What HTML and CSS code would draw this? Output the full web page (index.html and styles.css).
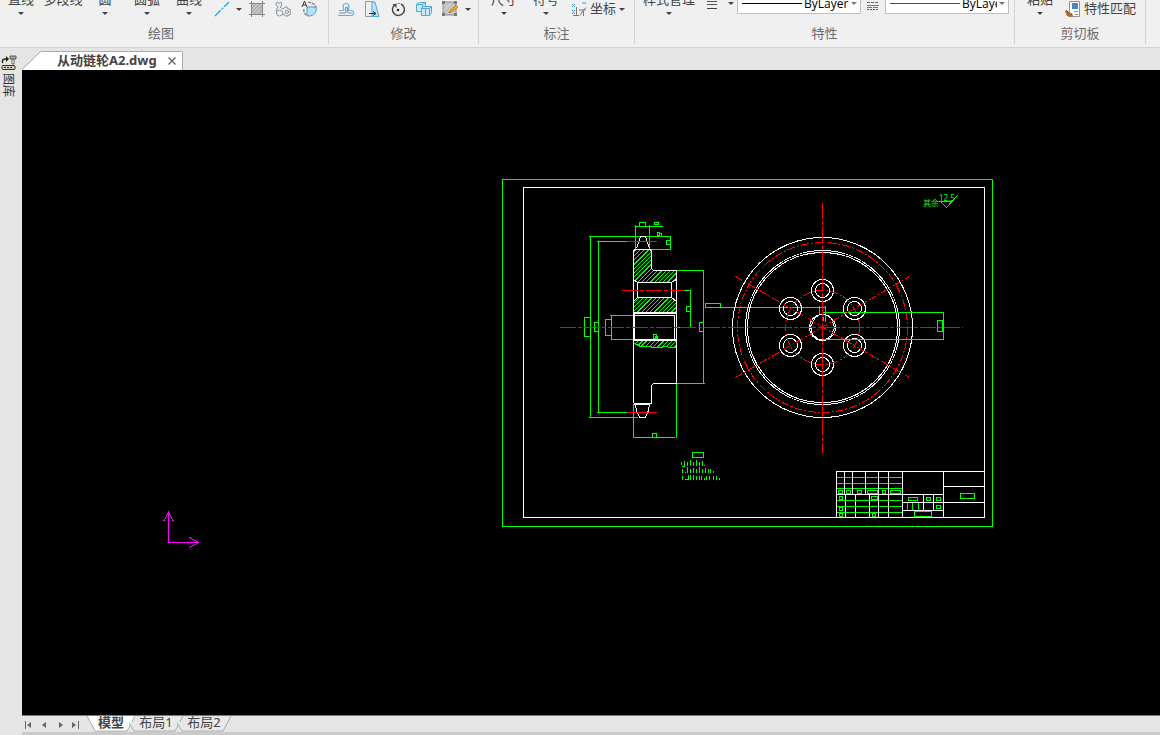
FILE: index.html
```html
<!DOCTYPE html>
<html lang="zh-CN">
<head>
    <meta charset="UTF-8">
    <meta name="viewport" content="width=device-width, initial-scale=1.0">
    <title>从动链轮A2.dwg</title>
    <link rel="stylesheet" href="styles.css">
</head>
<body>
    <header class="ribbon">
        <section class="group">
            <div class="tools">
                <button class="tool"><span>直线</span><i class="caret"></i></button>
                <button class="tool"><span>多段线</span><i class="caret none"></i></button>
                <button class="tool"><span>圆</span><i class="caret"></i></button>
                <button class="tool"><span>圆弧</span><i class="caret"></i></button>
                <button class="tool"><span>曲线</span><i class="caret"></i></button>
                <button class="icon-btn narrow" aria-label="构造线">
                    <svg width="16" height="16" viewBox="0 0 16 16"><path d="M1 15L15 1" stroke="#29a9e0" stroke-width="1.4" stroke-dasharray="8 1.5 2 1.5"/></svg>
                </button>
                <button class="drop" aria-label="更多"><i class="caret"></i></button>
                <button class="icon-btn" aria-label="面域">
                    <svg width="16" height="16" viewBox="0 0 16 16"><path d="M2 2h12v12H2z" fill="#bfc3c8"/><path d="M3 7L7 3M3 11L11 3M5 13L13 5M9 13L13 9" stroke="#a4a9b0"/><path d="M0 2.500h16M0 13.500h16M2.500 0v16M13.500 0v16" stroke="#858585"/></svg>
                </button>
                <button class="icon-btn" aria-label="修订云线">
                    <svg width="16" height="16" viewBox="0 0 16 16" fill="#e3e7f0" stroke="#9297a0"><path d="M1 2l2-1 1 1.500L6 1l1 3-2 2 3 2 2-2 2 0 1 2 2 0 0 3 1 1-1 2-2 0 0 1-3 0-1-2-2 1-5-1-1-4 2-3L1 4z"/><circle cx="4.500" cy="12" r="3" fill="#f4f4f4"/><circle cx="12" cy="11" r="1.500" fill="#f4f4f4"/></svg>
                </button>
                <button class="icon-btn" aria-label="区域覆盖">
                    <svg width="16" height="16" viewBox="0 0 16 16"><path d="M6 6h9a7 7 0 0 1-7 9 5 5 0 0 1-2-1z" fill="#b5e0f7" stroke="#3aa4d8"/><path d="M7 1.500a7 7 0 0 1 8 5M3 8a6 6 0 0 0 4 7" fill="none" stroke="#777" stroke-width="1.2" stroke-dasharray="3 1"/><path d="M1 6L3.500 0 6 6M2 4h3" fill="none" stroke="#333"/></svg>
                </button>
            </div>
            <h2 class="group-title lead">绘图</h2>
        </section>

        <section class="group">
            <div class="tools pad">
                <button class="icon-btn" aria-label="偏移">
                    <svg width="16" height="16" viewBox="0 0 16 16" fill="none"><path d="M0 14.500h14M1 9.500h4c2 0 0-2 0-4a3 3 0 0 1 6 0c0 2-2 4 0 4h2a2.500 2.500 0 0 1 0 5" stroke="#66aee0" stroke-width="1.2"/><path d="M1 12h6c2 0 .5-3 .5-5a1 1 0 0 1 2 0c0 2-1 5 1 5h3" stroke="#7b8490"/></svg>
                </button>
                <button class="icon-btn" aria-label="拉伸">
                    <svg width="16" height="16" viewBox="0 0 16 16"><path d="M1.500 .5h7v15h-7z" fill="#eee" stroke="#999"/><path d="M8 1h3l4 14.500H8z" fill="#b9e2f6" stroke="#50abd9"/><path d="M5 12.500h6M9 10.500l3 2-3 2" fill="none" stroke="#333"/></svg>
                </button>
                <button class="icon-btn" aria-label="旋转">
                    <svg width="16" height="16" viewBox="0 0 16 16"><path d="M5 3.500a6 6 0 1 0 6-.5" fill="none" stroke="#444" stroke-width="1.4"/><path d="M5 3.500a6 6 0 0 1 6-.5" fill="none" stroke="#777" stroke-dasharray="2 1"/><path d="M2.500 3h4v4z" fill="#444"/><circle cx="8" cy="9" r="1.300" fill="#333"/></svg>
                </button>
                <button class="icon-btn" aria-label="阵列">
                    <svg width="16" height="16" viewBox="0 0 16 16" fill="#cfe9f8" stroke="#4fa9d8"><path d="M.5 3.500l3-2 6 0 0 6-3 3h-6z"/><path d="M.5 3.500h6v7M6.500 3.500l3-2" fill="none"/><path d="M5.500 7.500l2-2h8v6l-2 3h-8z"/><path d="M5.500 7.500h8v7M13.500 7.500l2-2M9.500 7.500v7" fill="none"/></svg>
                </button>
                <button class="icon-btn" aria-label="编辑图案填充">
                    <svg width="16" height="16" viewBox="0 0 16 16"><path d="M1 1h13v13H1z" fill="#c9cdd2" stroke="#888"/><path d="M2 7L7 2M2 12L12 2M5 13L13 5" stroke="#aeb3b9"/><path d="M7 12l1-3 6-5 2 2-6 5z" fill="#f0a52a" stroke="#a86c16" stroke-width=".6"/><path d="M0 0h3v3H0zM12 0h3v3h-3zM0 12h3v3H0zM12 12h3v3h-3z" fill="#777"/></svg>
                </button>
                <button class="drop" aria-label="更多"><i class="caret"></i></button>
            </div>
            <h2 class="group-title">修改</h2>
        </section>

        <section class="group">
            <div class="tools pad">
                <button class="tool"><span>尺寸</span><i class="caret"></i></button>
                <button class="tool"><span>符号</span><i class="caret"></i></button>
                <button class="text-btn">
                    <svg width="16" height="16" viewBox="0 0 16 16" fill="none" stroke="#777"><path d="M5.500 6v9M2 14.500h6M8 9h7M9 14.500l3-5 3-3M12.500 10v5" /><path d="M1 3l3 3M4 3L1 6M12 1v3M14 1v3M1 9l3 4M4 9l-3 4" stroke="#3d9bd8" stroke-dasharray="2 1"/></svg>
                    <span>坐标</span><i class="caret"></i>
                </button>
            </div>
            <h2 class="group-title">标注</h2>
        </section>

        <section class="group">
            <div class="tools pad">
                <button class="tool wide"><span>样式管理</span><i class="caret"></i></button>
                <button class="icon-btn" aria-label="线宽">
                    <svg width="12" height="16" viewBox="0 0 12 16"><path d="M1 .5h10M1 3.500h10" stroke="#555"/><path d="M1 7.500h10" stroke="#444"/></svg>
                </button>
                <button class="drop high" aria-label="线宽列表"><i class="caret"></i></button>
                <label class="combo">
                    <svg class="sample" width="60" height="1"><path d="M0 0h60v1H0z" fill="#000"/></svg>
                    <select aria-label="线型"><option>ByLayer</option></select>
                    <i class="caret"></i>
                </label>
                <button class="icon-btn narrow" aria-label="颜色">
                    <svg width="12" height="16" viewBox="0 0 12 16"><path d="M0 1.500h12" stroke="#666" stroke-dasharray="3 1"/><path d="M0 4.500h12" stroke="#777"/><path d="M0 6.500h12" stroke="#777" stroke-dasharray="5 1"/><path d="M0 8.500h12" stroke="#555" stroke-dasharray="2 1"/></svg>
                </button>
                <label class="combo">
                    <svg class="sample" width="70" height="1"><path d="M0 0h70v1H0z" fill="#f00"/></svg>
                    <select aria-label="颜色"><option>ByLayer</option></select>
                    <i class="caret"></i>
                </label>
            </div>
            <h2 class="group-title">特性</h2>
        </section>

        <section class="group">
            <div class="tools pad">
                <button class="tool"><span>粘贴</span><i class="caret"></i></button>
                <button class="text-btn">
                    <svg width="16" height="16" viewBox="0 0 16 16"><path d="M4.500 .5h10v15h-10z" fill="#fff" stroke="#8c939c"/><path d="M7 2h6v6H7z" fill="#4c86c0"/><path d="M9 10.500h4M10 13.500h3" stroke="#888"/><path d="M0 10l3 0 1 2 3 0 1 3-3 1-3-1z" fill="#b8691f"/><path d="M1 9l3 3" stroke="#6e4219"/></svg>
                    <span>特性匹配</span>
                </button>
            </div>
            <h2 class="group-title">剪切板</h2>
        </section>
    </header>

    <main class="workspace">
        <aside class="sidebar">
            <button class="palette">
                <svg width="16" height="16" viewBox="0 0 16 16"><path d="M0 0h16v16H0z" fill="#e9e8cf"/><path d="M1.500 8V6q0-2 3-2h2" fill="none" stroke="#222" stroke-width="1.400"/><path d="M5 1l3 3-3 3z" fill="#222"/><path d="M9 1h6v3H9z" fill="#aaa" stroke="#444" stroke-width=".8"/><path d="M11 4h2v5h-2z" fill="#fff" stroke="#444" stroke-width=".8"/><rect x="1" y="10.500" width="13" height="4" rx="1" fill="#ccc" stroke="#333"/><path d="M3 12.500h9" stroke="#333" stroke-dasharray="2 1"/></svg>
                <span>图库</span>
            </button>
        </aside>

        <div class="document">
            <nav class="file-tabs">
                <div class="file-tab">
                    <svg class="slope" width="21" height="19" viewBox="0 0 21 19"><path d="M0 19L18 1q1-1 3-1v19z" fill="#fff"/><path d="M0 18.500L18 1q1-.5 3-.5" fill="none" stroke="#aaa"/></svg>
                    <a href="#drawing">从动链轮A2.dwg</a>
                    <button class="close" aria-label="关闭"><svg width="8" height="8" viewBox="0 0 8 8"><path d="M.5 .5l7 7M7.500 .5l-7 7" stroke="#666" stroke-width="1.400"/></svg></button>
                </div>
            </nav>

            <div class="canvas" id="drawing">
                <svg class="drawing" viewBox="22 70 1138 645" preserveAspectRatio="xMinYMin meet" role="img" aria-label="从动链轮">
                    <defs>
                        <clipPath id="section">
                            <path d="M634 250h18v21h24v9l-4 2h-35l-4-3zM637 298h35l4 3v11h-43v-11zM634 341h43v6h-24l-13-1-6-3z"/>
                        </clipPath>
                    </defs>
                    <!-- 剖面线 -->
                    <path class="hatch" clip-path="url(#section)" d="M595 235L715 355"/>

                    <g transform="translate(.49 .49)" fill="none">
                        <!-- 图框 -->
                        <rect class="g" x="502" y="179" width="490" height="347"/>
                        <rect class="w" x="523" y="187" width="461" height="330"/>

                        <!-- 剖视图尺寸 -->
                        <path class="g" d="M589 236H671M590 236V417M589 417H638M597 241H627M598 241V412M597 412H627"/>
                        <path class="g" d="M584 317h6v19h-6zM594 322h4v9h-4zM605 319h6v16h-6zM610 315H633M611 315V339H633"/>
                        <path class="g" d="M635 225V249M649 225V249M635 226H663M639 222h6v4h-6zM654 222h4v2h-4zM657 232h2v3h-2zM659 233h2v3M670 236V249M649 249H671M666 240h4v4h-4z"/>
                        <path class="g" d="M684 290H691M690 290V327M676 327H691M686 306h4v5h-4zM676 270H704M703 270V383M676 383H705M699 322h4v9h-4z"/>
                        <path class="g" d="M633 404V438M676 383V438M634 437H675M652 433h4v4h-4zM653 334h3v4h-3zM655 336h2v3h-2zM634 343l6 3h9l4 1h8l4-1 5 1h6"/>
                        <path class="g" d="M705 303h15v4h-15zM705 307H825M819 306V315M825 306V322M823 317v4"/>

                        <!-- 剖视图轮廓 -->
                        <path class="w" d="M635 249H650L651 251V268L653 270H676V383H653L651 385V403H634L633 402V250L635 249M640 236H645M640 236L636 248M645 236L649 248"/>
                        <path class="w" d="M635 404L636 410 639 417H645L648 410 649 404M634 404H650"/>
                        <path class="w" d="M637 282H671V297H637zM633 279L637 282M676 279L671 282M633 301L637 297M676 301L671 297"/>
                        <path class="w" d="M633 312H676M633 313H676M634 313V340M634 315H674V339M633 339H676M633 340H676"/>

                        <!-- 主视图 -->
                        <g class="w">
                            <circle cx="822" cy="327" r="90"/>
                            <circle cx="822" cy="327" r="77"/>
                            <circle cx="822" cy="327" r="75"/>
                            <circle cx="822" cy="290" r="11"/><circle cx="822" cy="290" r="7"/>
                            <circle cx="854" cy="308" r="11"/><circle cx="854" cy="308" r="7"/>
                            <circle cx="854" cy="345" r="11"/><circle cx="854" cy="345" r="7"/>
                            <circle cx="822" cy="364" r="11"/><circle cx="822" cy="364" r="7"/>
                            <circle cx="790" cy="345" r="11"/><circle cx="790" cy="345" r="7"/>
                            <circle cx="790" cy="308" r="11"/><circle cx="790" cy="308" r="7"/>
                            <circle cx="822" cy="327" r="13"/>
                            <path d="M815 317L819 314H825L831 318 834 327 831 335 825 339H818L812 334 810 326z"/>
                        </g>
                        <circle class="r dash" cx="822" cy="327" r="85"/>
                        <circle class="r dash" cx="822" cy="327" r="37"/>
                        <path class="g" d="M822 312H944M822 339H944M943 312V339M937 320h5v11h-5z"/>
                        <path class="r center" d="M560 327H963M822 203V453"/>
                        <path class="r dash" d="M735 276L909 377M735 377L909 276"/>
                        <path class="r center" d="M622 290H684"/>
                        <path class="c" d="M627 241H657M627 412H657"/>

                        <!-- 粗糙度 -->
                        <path class="g" d="M939 201H952L946 207 940 201M946 207L957 195"/>

                        <!-- 技术要求 -->
                        <path class="g" d="M692 452h11v5h-11z"/>
                        <path class="g" d="M681 462v3M684 461v5h-2M687 462v4M690 460v6M693 462v4M696 460v6M699 462v4M702 461v5M704 465v1M682 469v4M685 472v1M687 467v6M690 469v4M693 468v5M696 469v4M699 467v6M702 469v4M705 468v5M708 469v4M710 469v4M713 471v2M682 476v4M685 479h3v-4M690 475v5M693 475v5M696 476v4M699 476v4M701 476v4M704 478v2M706 476v4M709 476v4M713 476v4M716 476v4M719 478v2"/>

                        <!-- 标题栏 -->
                        <path class="g" d="M836 477H902M836 483H902M836 488H902M836 500H902M836 506H902M836 512H902M907 502V510M912 502V510M918 502V510"/>
                        <path class="w" d="M836 517V471H984M844 471V494M852 471V494M865 471V494M878 471V517M888 471V517M902 471V517M836 494H943M845 494V517M855 494V517M869 494V517M943 471V517M923 494V510M933 494V510M902 502H984M902 510H943M943 486H984"/>
                        <path class="g" d="M838 490h4v3h-4zM846 490h4v3h-4zM857 490h4v3h-4zM867 490h10v3h-10zM882 490h3v3h-3zM890 490h10v3h-10zM839 496h3v3h-3zM871 496h6v3h-6zM839 507h3v3h-3zM839 513h3v3h-3zM872 513h3v3h-3zM908 497h9v3h-9zM926 497h4v3h-4zM936 497h4v3h-4zM936 505h4v3h-4zM914 511h17v5h-17zM960 493h14v5h-14z"/>

                        <!-- 坐标系 -->
                        <path class="m" d="M168 512V542H198M163 521L168 512 173 521M189 537L198 542 189 547"/>
                    </g>
                    <text class="note" x="923" y="206">其余</text>
                    <text class="note" x="939" y="201">12.5</text>
                </svg>
            </div>

            <footer class="layout-bar">
                <div class="pager">
                    <button aria-label="第一个"><svg width="8" height="8" viewBox="0 0 8 8"><path d="M1 0h1v8H1zM7 1v6L3 4z"/></svg></button>
                    <button aria-label="上一个"><svg width="8" height="8" viewBox="0 0 8 8"><path d="M6 1v6L2 4z"/></svg></button>
                    <button aria-label="下一个"><svg width="8" height="8" viewBox="0 0 8 8"><path d="M3 1v6l4-3z"/></svg></button>
                    <button aria-label="最后一个"><svg width="8" height="8" viewBox="0 0 8 8"><path d="M7 0h1v8H7zM1 1v6l4-3z"/></svg></button>
                </div>
                <button class="layout-tab active">
                    <svg viewBox="0 0 48 17" preserveAspectRatio="none"><path d="M0 0L8 16H40L48 0"/></svg>
                    <span>模型</span>
                </button>
                <button class="layout-tab">
                    <svg viewBox="0 0 54 17" preserveAspectRatio="none"><path d="M0 7L5 16H46L54 0"/></svg>
                    <span>布局1</span>
                </button>
                <button class="layout-tab">
                    <svg viewBox="0 0 54 17" preserveAspectRatio="none"><path d="M0 7L5 16H46L54 0"/></svg>
                    <span>布局2</span>
                </button>
            </footer>
        </div>
    </main>
</body>
</html>
```
FILE: styles.css
```css
* { box-sizing: border-box; }
html, body { height: 100%; }
body { margin: 0; display: flex; flex-direction: column; overflow: hidden; background: #e5e5e5; color: #444; font: 13px/16px "Noto Sans", "Noto Sans CJK SC", sans-serif; }
button, select { margin: 0; padding: 0; border: 0; background: none; color: inherit; font: inherit; }
svg { display: block; flex: none; }

/* ribbon */
.ribbon { display: flex; flex: none; height: 48px; background: #f0f0f0; border-bottom: 1px solid #d0d0d0; overflow: hidden; }
.group { display: flex; flex-direction: column; flex: none; border-right: 1px solid #d4d4d4; margin-bottom: 3px; }
.tools { display: flex; align-items: flex-end; height: 18px; padding-right: 6px; }
.tools.pad { padding: 0 5px 0 4px; }
.tool { display: flex; flex-direction: column; align-items: center; justify-content: flex-end; width: 42px; height: 18px; padding-bottom: 3px; gap: 5px; white-space: nowrap; }
.tool.wide { width: 60px; }
.icon-btn { display: flex; align-items: center; justify-content: center; width: 26px; height: 18px; }
.icon-btn.narrow { width: 24px; }
.drop { display: flex; align-items: center; justify-content: center; width: 10px; height: 18px; }
.drop.high { width: 12px; padding-bottom: 12px; }
.text-btn { display: flex; align-items: center; gap: 3px; height: 18px; padding: 0 4px; white-space: nowrap; }
.text-btn span { line-height: 14px; padding-bottom: 2px; }
.caret { flex: none; border: 3px solid transparent; border-top-color: #444; border-bottom: 0; }
.caret.none { visibility: hidden; }
.group-title { margin: 6px 0 0; text-align: center; font-size: 13px; line-height: 18px; font-weight: normal; color: #6c6c6c; }
.group-title.lead { padding-right: 6px; }
.combo { display: flex; flex: none; align-items: flex-end; gap: 2px; width: 124px; height: 20px; margin-bottom: 4px; padding: 0 3px 0 4px; background: #fff; border: 1px solid #c0c0c0; }
.combo select { flex: 1; min-width: 0; height: 18px; appearance: none; font-family: "Open Sans", sans-serif; font-size: 12px; color: #000; overflow: hidden; }
.combo .sample { margin-bottom: 9px; }
.combo .caret { margin-bottom: 8px; border-top-color: #777; }

/* workspace */
.workspace { display: flex; flex: 1; min-height: 0; }
.sidebar { flex: none; width: 22px; padding: 7px 1px; }
.palette { display: flex; flex-direction: column; align-items: center; gap: 2px; width: 16px; color: #333; font-size: 12px; }
.palette span { writing-mode: vertical-rl; text-orientation: sideways; padding-right: 2px; }
.document { display: flex; flex-direction: column; flex: 1; min-width: 0; }
.file-tabs { display: flex; flex: none; align-items: flex-end; height: 22px; }
.file-tab { display: flex; height: 19px; }
.file-tab a { padding: 0 11px 0 14px; border-top: 1px solid #aaa; background: #fff; color: #444; font-weight: bold; line-height: 16px; text-decoration: none; }
.file-tab .close { display: flex; align-items: center; padding-right: 6px; background: #fff; border-top: 1px solid #aaa; border-right: 1px solid #aaa; border-top-right-radius: 2px; }

/* drawing */
.canvas { flex: 1; min-height: 0; background: #000; }
.drawing { width: 100%; height: 100%; shape-rendering: crispEdges; }
.w { stroke: #fff; }
.g { stroke: #0f0; }
.r { stroke: #f00; }
.c { stroke: #ff0028; }
.m { stroke: #f0f; }
.hatch { stroke: #0f0; stroke-width: 120; stroke-dasharray: .9 2.1; }
.dash { stroke-dasharray: 8 2 2 2; }
.center { stroke-dasharray: 16 2 4 2; }
.note { fill: #0f0; font-size: 8px; }

/* layout tabs */
.layout-bar { display: flex; flex: none; height: 20px; border-top: 1px solid #777; border-bottom: 3px solid #cacaca; }
.pager { display: flex; align-items: center; width: 65px; padding: 2px 0 0 2px; }
.pager button { display: flex; width: 16px; fill: #666; }
.layout-tab { display: grid; width: 54px; height: 16px; margin-right: -6px; }
.layout-tab svg, .layout-tab span { grid-area: 1 / 1; }
.layout-tab svg { width: 100%; height: 16px; fill: #e9e9e9; stroke: #aaa; }
.layout-tab span { line-height: 12px; }
.layout-tab.active { width: 48px; font-weight: bold; }
.layout-tab.active svg { fill: #fff; }
```
